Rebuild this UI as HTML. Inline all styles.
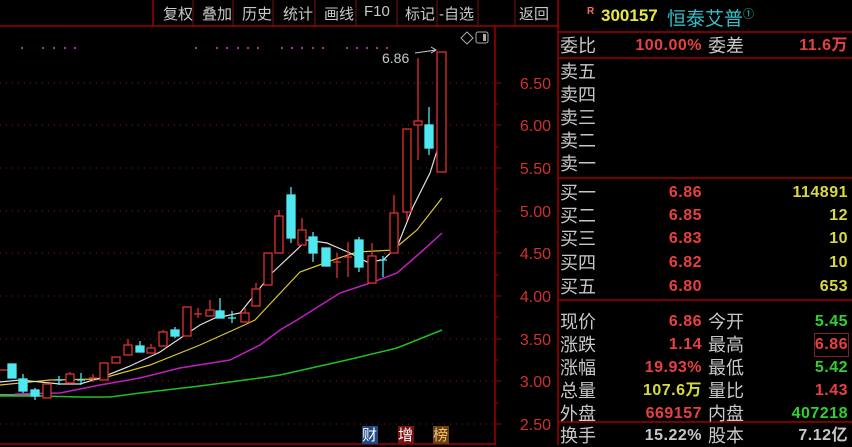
<!DOCTYPE html>
<html><head><meta charset="utf-8"><style>
*{margin:0;padding:0}
body{width:852px;height:445px;background:#000;overflow:hidden;position:relative;font-family:"Liberation Sans","Noto Sans CJK SC",sans-serif}
.t{position:absolute;white-space:nowrap}
.btn{position:absolute;top:3px;color:#c8c8c8;font-size:15px}
.lab{position:absolute;left:560px;color:#c8c8c8;font-size:18px;line-height:22px}
.lab2{position:absolute;left:708px;color:#c8c8c8;font-size:18px;line-height:22px}
.v1{position:absolute;right:150px;font-size:16px;font-weight:bold;line-height:22px;letter-spacing:0.5px}
.v2{position:absolute;right:4px;font-size:16px;font-weight:bold;line-height:22px;letter-spacing:0.5px}
.r{color:#e84040}.y{color:#d8d840}.g{color:#30d030}.w{color:#c8c8c8}
</style></head><body>
<svg width="852" height="445" style="position:absolute;left:0;top:0">
<g stroke="#a00000" stroke-width="1.5" fill="none">
<line x1="0" y1="26" x2="558" y2="26"/>
<line x1="153" y1="0" x2="153" y2="26"/>
<line x1="495" y1="26" x2="495" y2="445"/>
<line x1="558" y1="0" x2="558" y2="445"/>
<line x1="558" y1="32" x2="852" y2="32"/>
<line x1="558" y1="58" x2="852" y2="58"/>
<line x1="558" y1="178" x2="852" y2="178"/>
<line x1="558" y1="300" x2="852" y2="300"/>
<line x1="558" y1="422" x2="852" y2="422"/>
<line x1="0" y1="444" x2="495" y2="444"/>
</g>
<g stroke="#7a1010" stroke-width="1">
<line x1="193" y1="0" x2="193" y2="26"/><line x1="233" y1="0" x2="233" y2="26"/><line x1="273" y1="0" x2="273" y2="26"/><line x1="315" y1="0" x2="315" y2="26"/><line x1="356" y1="0" x2="356" y2="26"/><line x1="397" y1="0" x2="397" y2="26"/><line x1="437" y1="0" x2="437" y2="26"/><line x1="478" y1="0" x2="478" y2="26"/><line x1="515" y1="0" x2="515" y2="26"/>
</g>
<g stroke="#8a1a1a" stroke-width="1" stroke-dasharray="1,5">
<line x1="0" y1="83" x2="495" y2="83"/><line x1="0" y1="125" x2="495" y2="125"/><line x1="0" y1="168" x2="495" y2="168"/><line x1="0" y1="211" x2="495" y2="211"/><line x1="0" y1="253" x2="495" y2="253"/><line x1="0" y1="296" x2="495" y2="296"/><line x1="0" y1="339" x2="495" y2="339"/><line x1="0" y1="381" x2="495" y2="381"/><line x1="0" y1="424" x2="495" y2="424"/>
</g>
<g stroke="#a00000" stroke-width="1">
<line x1="495" y1="83" x2="501" y2="83"/><line x1="495" y1="125" x2="501" y2="125"/><line x1="495" y1="168" x2="501" y2="168"/><line x1="495" y1="211" x2="501" y2="211"/><line x1="495" y1="253" x2="501" y2="253"/><line x1="495" y1="296" x2="501" y2="296"/><line x1="495" y1="339" x2="501" y2="339"/><line x1="495" y1="381" x2="501" y2="381"/><line x1="495" y1="424" x2="501" y2="424"/>
<line x1="495" y1="104" x2="498" y2="104"/><line x1="495" y1="147" x2="498" y2="147"/><line x1="495" y1="189" x2="498" y2="189"/><line x1="495" y1="232" x2="498" y2="232"/><line x1="495" y1="275" x2="498" y2="275"/><line x1="495" y1="317" x2="498" y2="317"/><line x1="495" y1="360" x2="498" y2="360"/><line x1="495" y1="403" x2="498" y2="403"/>
</g>
<g fill="#c020c0">
<rect x="21" y="47" width="2" height="2"/><rect x="42" y="47" width="2" height="2"/><rect x="53" y="47" width="2" height="2"/><rect x="64" y="47" width="2" height="2"/><rect x="74" y="47" width="2" height="2"/>
<rect x="195" y="47" width="2" height="2"/><rect x="216" y="47" width="2" height="2"/><rect x="226" y="47" width="2" height="2"/><rect x="237" y="47" width="2" height="2"/><rect x="247" y="47" width="2" height="2"/><rect x="257" y="47" width="2" height="2"/>
<rect x="281" y="47" width="2" height="2"/><rect x="291" y="47" width="2" height="2"/><rect x="301" y="47" width="2" height="2"/><rect x="312" y="47" width="2" height="2"/><rect x="322" y="47" width="2" height="2"/>
<rect x="346" y="47" width="2" height="2"/><rect x="356" y="47" width="2" height="2"/><rect x="366" y="47" width="2" height="2"/><rect x="376" y="47" width="2" height="2"/><rect x="386" y="47" width="2" height="2"/>
</g>
<path d="M461 38 L467 32 L473 38 L467 44 Z" stroke="#aaa" fill="none"/>
<rect x="476" y="32" width="12" height="11" rx="2" stroke="#aaa" fill="none"/><rect x="483" y="34" width="3" height="7" fill="#aaa"/>
<!-- MAs -->
<polyline fill="none" stroke="#888" stroke-width="2" points="0,395 30,395"/>
<polyline fill="none" stroke="#20c020" stroke-width="1.5" points="0,396 40,396 80,397 110,397 140,393 200,386 260,378 280,375 347,360 397,348 442,330"/>
<polyline fill="none" stroke="#c020c0" stroke-width="1.5" points="15,394 60,393 100,385 140,378 180,368 230,360 260,345 280,330 297,320 340,293 373,282 397,273 420,253 442,233"/>
<polyline fill="none" stroke="#d8c830" stroke-width="1.2" points="0,385 50,380 100,379 150,365 200,345 240,327 255,320 300,272 333,260 357,252 393,250 417,230 442,198"/>
<polyline fill="none" stroke="#e0e0e0" stroke-width="1.2" points="0,382 20,380 60,384 80,384 100,378 130,366 160,352 185,335 200,325 215,318 240,313 272,273 307,240 327,243 350,253 367,262 383,260 397,247 413,207 430,173 442,135"/>
<!-- candles -->
<g stroke="#e03030" fill="#000" stroke-width="1.3">
<line x1="0" y1="370" x2="8" y2="370"/>
<rect x="43" y="384" width="8" height="14"/>
<rect x="66" y="374" width="8" height="9"/><line x1="70" y1="372" x2="70" y2="374"/>
<line x1="89" y1="378" x2="97" y2="378"/><line x1="93" y1="374" x2="93" y2="382"/>
<rect x="100" y="363" width="8" height="17"/>
<rect x="112" y="357" width="8" height="6"/>
<rect x="124" y="345" width="8" height="10"/><line x1="128" y1="339" x2="128" y2="345"/>
<rect x="147" y="348" width="8" height="5"/><line x1="151" y1="344" x2="151" y2="348"/>
<rect x="159" y="332" width="8" height="14"/><line x1="163" y1="330" x2="163" y2="332"/>
<rect x="183" y="307" width="8" height="29"/>
<line x1="194" y1="314" x2="202" y2="314"/><line x1="198" y1="308" x2="198" y2="318"/>
<rect x="206" y="310" width="8" height="6"/><line x1="210" y1="300" x2="210" y2="310"/>
<rect x="241" y="313" width="8" height="9"/><line x1="245" y1="308" x2="245" y2="313"/>
<rect x="252" y="289" width="8" height="17"/><line x1="256" y1="283" x2="256" y2="289"/>
<rect x="264" y="253" width="8" height="32"/>
<rect x="275" y="216" width="8" height="37"/><line x1="279" y1="210" x2="279" y2="216"/>
<rect x="298" y="230" width="8" height="15"/><line x1="302" y1="218" x2="302" y2="230"/>
<line x1="333" y1="262" x2="341" y2="262"/><line x1="337" y1="253" x2="337" y2="278"/>
<line x1="344" y1="257" x2="352" y2="257"/><line x1="348" y1="242" x2="348" y2="277"/>
<rect x="368" y="256" width="8" height="27"/><line x1="372" y1="243" x2="372" y2="256"/>
<rect x="390" y="213" width="8" height="40"/><line x1="394" y1="195" x2="394" y2="213"/>
<rect x="403" y="129" width="8" height="83"/><line x1="407" y1="212" x2="407" y2="220"/>
<rect x="414" y="121" width="8" height="4"/><line x1="418" y1="58" x2="418" y2="121"/><line x1="418" y1="125" x2="418" y2="160"/>
<rect x="437" y="52" width="9" height="120"/>
</g>
<g stroke="#50e8f0" fill="#50e8f0" stroke-width="1.3">
<rect x="8" y="364" width="8" height="14"/>
<rect x="19" y="379" width="8" height="12"/><line x1="23" y1="374" x2="23" y2="393"/>
<rect x="31" y="390" width="8" height="6"/><line x1="35" y1="388" x2="35" y2="400"/>
<line x1="55" y1="380" x2="63" y2="380"/><line x1="59" y1="376" x2="59" y2="385"/>
<line x1="77" y1="380" x2="85" y2="380"/><line x1="81" y1="373" x2="81" y2="385"/>
<rect x="136" y="346" width="8" height="6"/><line x1="140" y1="341" x2="140" y2="346"/>
<rect x="171" y="330" width="8" height="6"/><line x1="175" y1="327" x2="175" y2="338"/>
<rect x="216" y="311" width="8" height="7"/><line x1="220" y1="298" x2="220" y2="311"/>
<line x1="228" y1="318" x2="236" y2="318"/><line x1="232" y1="311" x2="232" y2="323"/>
<rect x="287" y="195" width="8" height="43"/><line x1="291" y1="187" x2="291" y2="243"/>
<rect x="309" y="237" width="8" height="16"/><line x1="313" y1="232" x2="313" y2="262"/>
<rect x="322" y="248" width="8" height="18"/>
<rect x="355" y="240" width="8" height="27"/><line x1="359" y1="237" x2="359" y2="272"/>
<line x1="379" y1="260" x2="387" y2="260"/><line x1="383" y1="256" x2="383" y2="277"/>
<rect x="425" y="125" width="8" height="23"/><line x1="429" y1="107" x2="429" y2="155"/>
</g>
<path d="M415 53 L436 50 M431 47 L436 50 L431 53" stroke="#ccc" fill="none"/>
<g fill="#d03030" font-size="16" font-family="Liberation Sans" text-anchor="end">
<text x="551" y="89">6.50</text><text x="551" y="131">6.00</text><text x="551" y="174">5.50</text><text x="551" y="217">5.00</text><text x="551" y="259">4.50</text><text x="551" y="302">4.00</text><text x="551" y="345">3.50</text><text x="551" y="387">3.00</text><text x="551" y="430">2.50</text>
</g>
<text x="382" y="63" fill="#c8c8c8" font-size="14" font-family="Liberation Sans">6.86</text>
<rect x="362" y="426" width="16" height="18" fill="#1e4a80"/>
<rect x="398" y="426" width="16" height="18" fill="#7a1010"/>
<rect x="433" y="426" width="16" height="18" fill="#6a4010"/>
</svg>
<div class="t" style="left:362px;top:424px;color:#fff;font-size:15px">财</div>
<div class="t" style="left:398px;top:424px;color:#fff;font-size:15px">增</div>
<div class="t" style="left:433px;top:424px;color:#f0c070;font-size:15px">榜</div>
<div class="btn" style="left:163px">复权</div><div class="btn" style="left:202px">叠加</div><div class="btn" style="left:242px">历史</div><div class="btn" style="left:283px">统计</div><div class="btn" style="left:324px">画线</div><div class="btn" style="left:364px">F10</div><div class="btn" style="left:405px">标记</div><div class="btn" style="left:439px">-自选</div><div class="btn" style="left:519px">返回</div>
<div class="t" style="left:587px;top:6px;color:#f07060;font-size:10px;font-weight:bold">R</div>
<div class="t" style="left:601px;top:6px;color:#e8e840;font-size:17px;font-weight:bold">300157</div>
<div class="t" style="left:667px;top:4px;color:#30c0c8;font-size:19px">恒泰艾普<sup style="font-size:11px">①</sup></div>
<div class="lab" style="top:35px">委比</div><div class="v1 r" style="top:35px">100.00%</div><div class="lab2" style="top:35px">委差</div><div class="v2 r" style="top:35px">11.6万</div>
<div class="lab" style="top:61px">卖五</div><div class="lab" style="top:84px">卖四</div><div class="lab" style="top:107px">卖三</div><div class="lab" style="top:130px">卖二</div><div class="lab" style="top:153px">卖一</div>
<div class="lab" style="top:182px">买一</div><div class="v1 r" style="top:182px">6.86</div><div class="v2 y" style="top:182px">114891</div>
<div class="lab" style="top:205px">买二</div><div class="v1 r" style="top:205px">6.85</div><div class="v2 y" style="top:205px">12</div>
<div class="lab" style="top:228px">买三</div><div class="v1 r" style="top:228px">6.83</div><div class="v2 y" style="top:228px">10</div>
<div class="lab" style="top:252px">买四</div><div class="v1 r" style="top:252px">6.82</div><div class="v2 y" style="top:252px">10</div>
<div class="lab" style="top:276px">买五</div><div class="v1 r" style="top:276px">6.80</div><div class="v2 y" style="top:276px">653</div>
<div class="lab" style="top:311px">现价</div><div class="v1 r" style="top:311px">6.86</div><div class="lab2" style="top:311px">今开</div><div class="v2 g" style="top:311px">5.45</div>
<div class="lab" style="top:334px">涨跌</div><div class="v1 r" style="top:334px">1.14</div><div class="lab2" style="top:334px">最高</div><div class="v2 r" style="top:334px;outline:1px solid #802020">6.86</div>
<div class="lab" style="top:357px">涨幅</div><div class="v1 r" style="top:357px">19.93%</div><div class="lab2" style="top:357px">最低</div><div class="v2 g" style="top:357px">5.42</div>
<div class="lab" style="top:380px">总量</div><div class="v1 y" style="top:380px">107.6万</div><div class="lab2" style="top:380px">量比</div><div class="v2 r" style="top:380px">1.43</div>
<div class="lab" style="top:403px">外盘</div><div class="v1 r" style="top:403px">669157</div><div class="lab2" style="top:403px">内盘</div><div class="v2 g" style="top:403px">407218</div>
<div class="lab" style="top:425px">换手</div><div class="v1 w" style="top:425px">15.22%</div><div class="lab2" style="top:425px">股本</div><div class="v2 w" style="top:425px">7.12亿</div>
</body></html>
